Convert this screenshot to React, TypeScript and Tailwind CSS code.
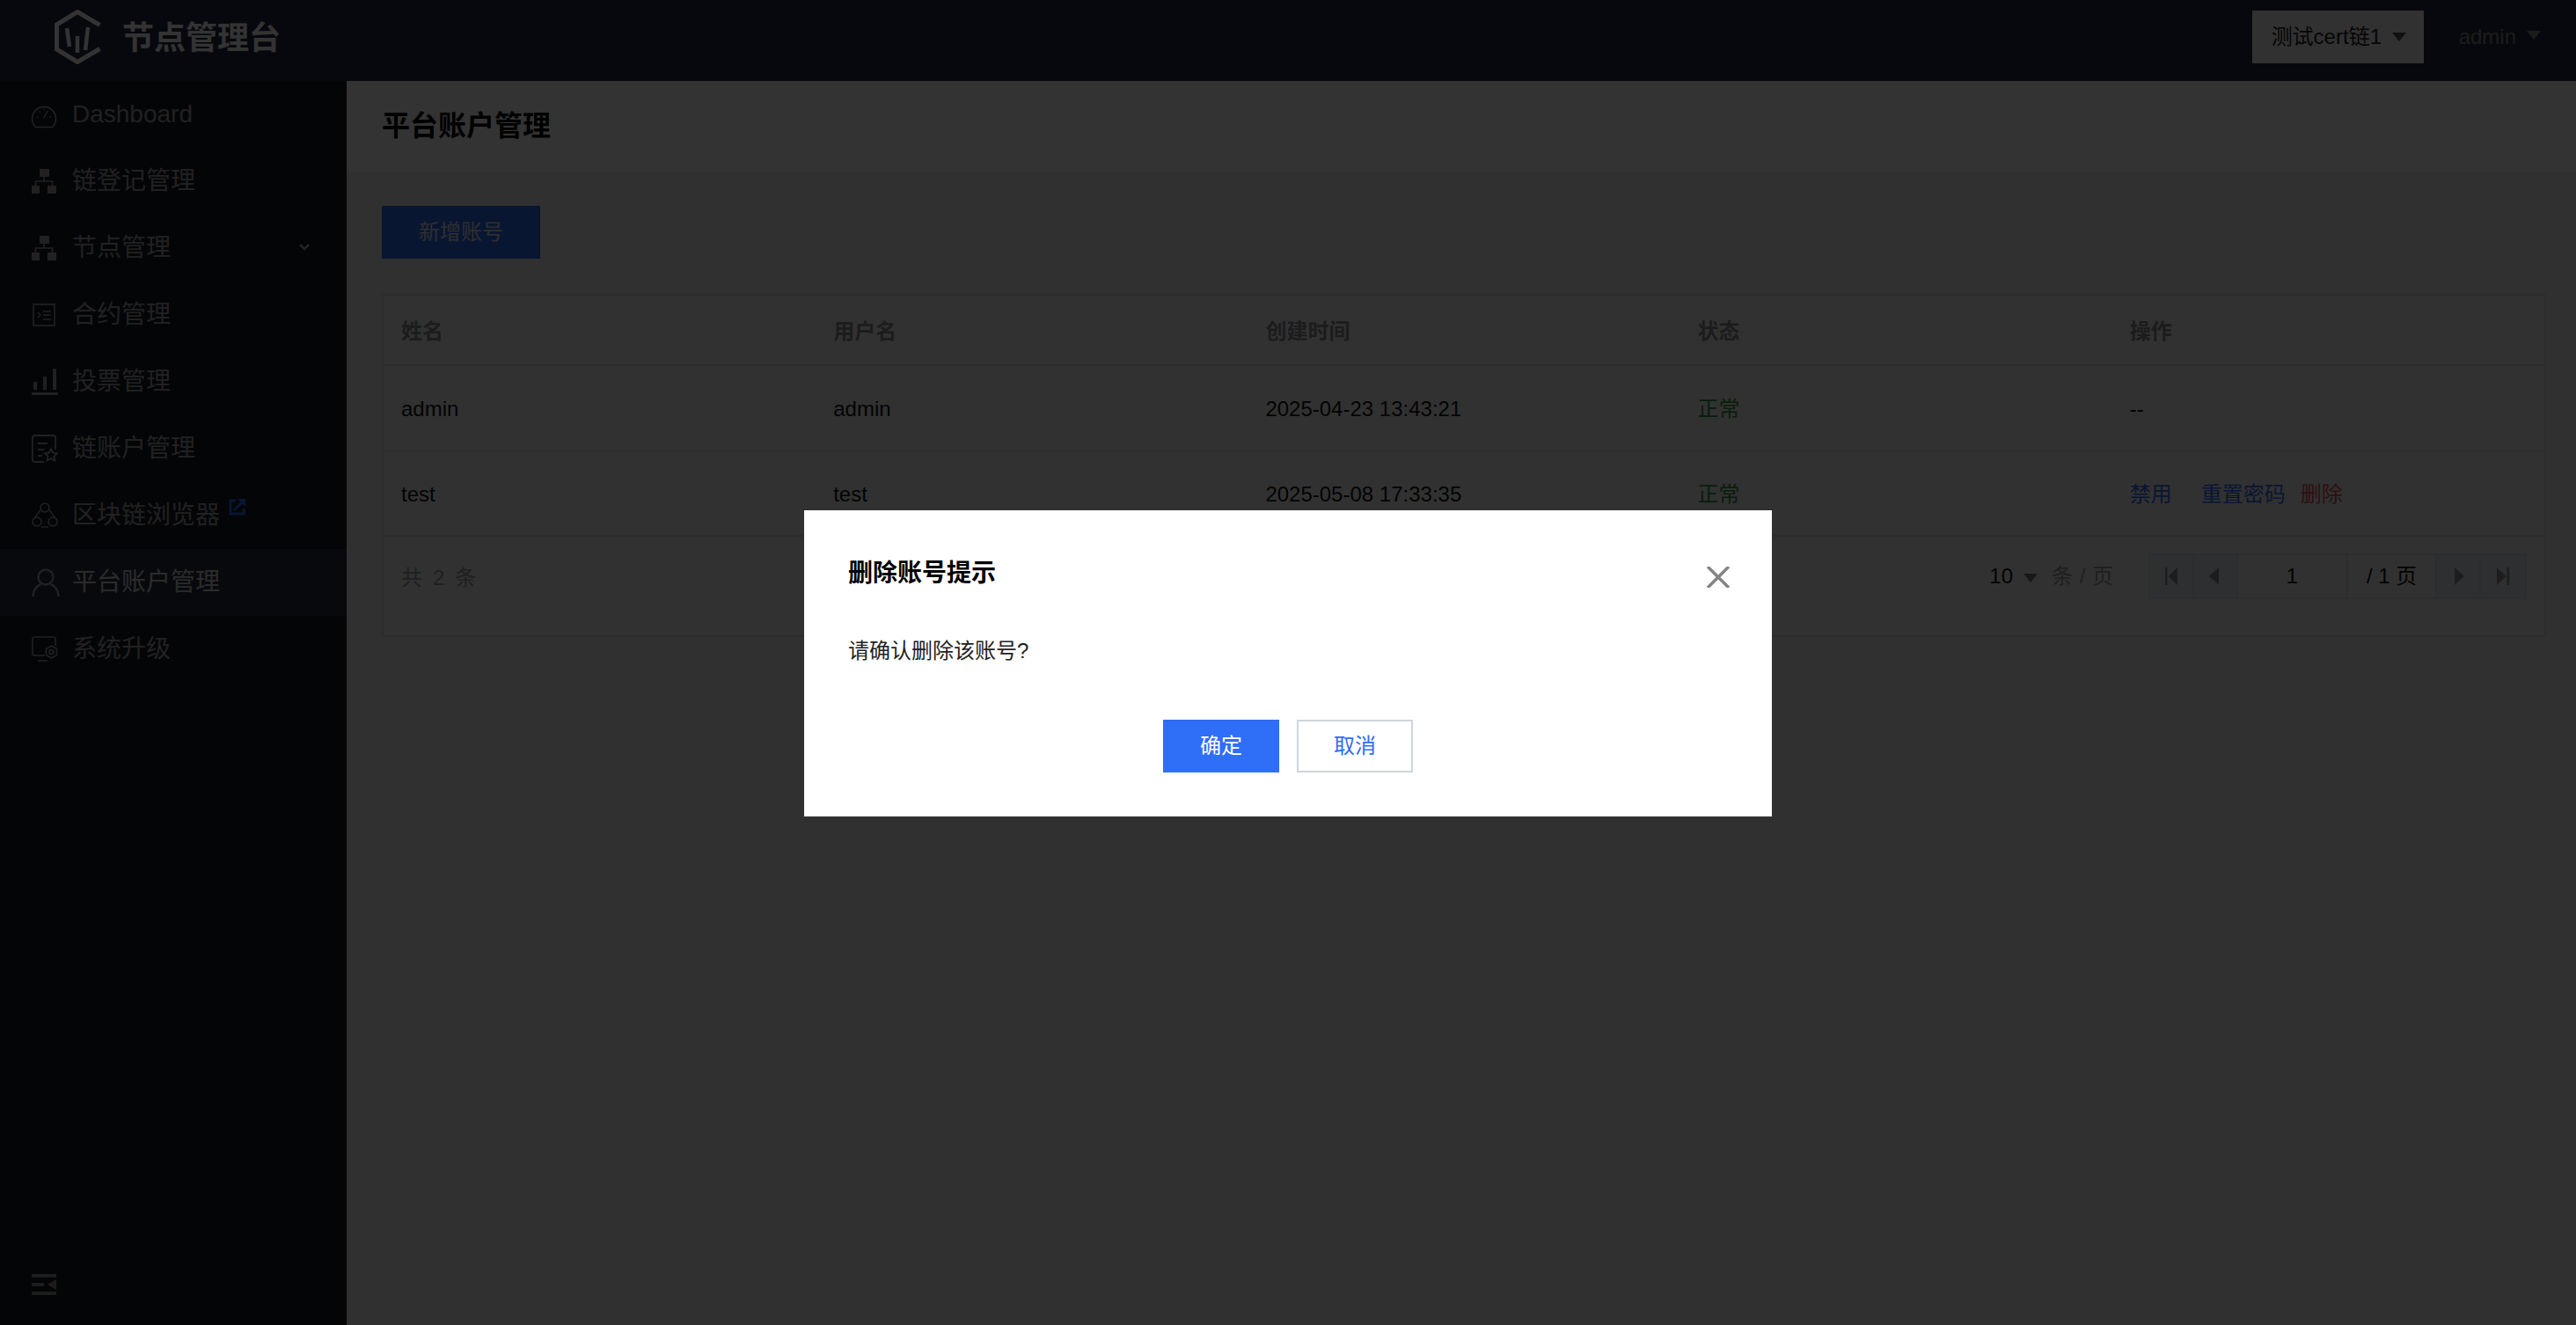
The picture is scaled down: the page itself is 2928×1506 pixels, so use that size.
import React from "react";

const font = { fontFamily: '"Liberation Sans", "Noto Sans CJK SC", sans-serif' };

const Gauge = () => (
  <svg width="28" height="34" viewBox="0 0 28 34" fill="none" stroke="currentColor" strokeWidth="1.6">
    <path d="M4.500 31.500A13.500 13.500 0 1 1 23.500 31.500Z" />
    <path d="M14 21 18 13M6 20h1.500M20.500 20H22M8.500 13.500l1 1M14 10.500V12" strokeWidth="1.400" />
  </svg>
);
const Sitemap = () => (
  <svg width="28" height="28" viewBox="0 0 28 28" fill="currentColor">
    <rect x="9" y="0" width="11" height="9" />
    <rect x="0" y="19" width="9" height="9" />
    <rect x="18" y="19" width="10" height="9" />
    <path d="M14 9v5M4.500 19v-5h19v5" fill="none" stroke="currentColor" strokeWidth="1.600" />
  </svg>
);
const Contract = () => (
  <svg width="28" height="28" viewBox="0 0 28 28" fill="none" stroke="currentColor" strokeWidth="1.600">
    <rect x="2" y="2" width="24" height="24" />
    <path d="M7 11l3 3-3 3M13 10h9M13 14h9M13 19h9" strokeWidth="1.300" />
  </svg>
);
const Bars = () => (
  <svg width="30" height="30" viewBox="0 0 30 30" fill="currentColor">
    <rect x="2" y="15" width="4" height="9" />
    <rect x="13" y="9" width="4" height="15" />
    <rect x="24" y="0" width="4" height="24" />
    <rect x="0" y="27" width="30" height="3" />
  </svg>
);
const DocStar = () => (
  <svg width="30" height="32" viewBox="0 0 30 32" fill="none" stroke="currentColor" strokeWidth="1.800">
    <path d="M14 31H3a2 2 0 0 1-2-2V3a2 2 0 0 1 2-2h22a2 2 0 0 1 2 2v14" />
    <path d="M7 10h11M7 17h7M7 24h5" />
    <path d="M22 16l2.200 4.600 5 .6-3.700 3.400 1 5-4.500-2.500-4.500 2.500 1-5-3.700-3.400 5-.6Z" />
  </svg>
);
const Circles = () => (
  <svg width="30" height="30" viewBox="0 0 30 30" fill="none" stroke="currentColor" strokeWidth="1.500">
    <circle cx="15" cy="6" r="5" />
    <circle cx="6" cy="22" r="5" />
    <circle cx="24" cy="22" r="5" />
    <path d="M10 9 3.500 17M20 9l6.500 8M11 28h8" />
  </svg>
);
const User = () => (
  <svg width="32" height="32" viewBox="0 0 32 32" fill="none" stroke="currentColor" strokeWidth="2.400">
    <circle cx="16" cy="10" r="8.500" />
    <path d="M1.500 32c0-8 5-13 9-13.500M30.500 32c0-8-5-13-9-13.500" />
  </svg>
);
const Monitor = () => (
  <svg width="30" height="30" viewBox="0 0 30 30" fill="none" stroke="currentColor" strokeWidth="1.500">
    <path d="M15 22H3a2 2 0 0 1-2-2V3a2 2 0 0 1 2-2h22a2 2 0 0 1 2 2v8M7 28h11" />
    <path d="M22.500 11l6 3.500v7l-6 3.500-6-3.500v-7Z" />
    <circle cx="22.500" cy="18" r="2.500" />
  </svg>
);
const Logo = () => (
  <svg width="53" height="62" viewBox="0 0 53 62" fill="none" stroke="#ffffff" strokeWidth="5">
    <path d="M51.500 17.500 26 2.500 2.500 17v28L26 59.500 51.500 44.500" />
    <path d="M14 21 17 42" strokeWidth="4.500" />
    <path d="M26 30V49" strokeWidth="4.500" />
    <path d="M38 20 35 46" strokeWidth="4.500" />
  </svg>
);

const menu: [React.ReactNode, string][] = [
  [<Gauge />, "Dashboard"],
  [<Sitemap />, "链登记管理"],
  [<Sitemap />, "节点管理"],
  [<Contract />, "合约管理"],
  [<Bars />, "投票管理"],
  [<DocStar />, "链账户管理"],
  [<Circles />, "区块链浏览器"],
  [<User />, "平台账户管理"],
  [<Monitor />, "系统升级"],
];

const Tri = ({ className }: { className: string }) => (
  <span className={"block h-0 w-0 border-x-[8px] border-t-[10px] border-x-transparent " + className} />
);

const PageBtn = ({ d }: { d: string }) => (
  <div className="flex h-full w-[50px] items-center justify-center border-r-2 border-[#dcdfe6] bg-[#e3e8ee] last:border-r-0">
    <svg width="14" height="20" viewBox="0 0 14 20" fill="#8f8f8f">
      <path d={d} />
    </svg>
  </div>
);

const Row = ({ children, className }: { children: React.ReactNode; className: string }) => (
  <div className={"grid grid-cols-5 items-center border-b-2 text-[24px] *:pl-5 " + className}>{children}</div>
);

export default function App() {
  return (
    <div className="relative flex h-screen w-full flex-col overflow-hidden bg-[#ffffff]" style={font}>
      <header className="flex h-[92px] shrink-0 items-center justify-between bg-[#232b40] pb-[8px] pl-[62px] pr-[40px]">
        <div className="flex items-center gap-[24px]">
          <Logo />
          <span className="pt-[3px] text-[36px] font-bold leading-none text-white">节点管理台</span>
        </div>
        <div className="flex items-center">
          <div className="flex h-[60px] w-[195px] items-center gap-[12px] bg-[#f3f3f3] pl-[22px] text-[24px] text-[#222]">
            <span>测试cert链1</span>
            <Tri className="border-t-[#555]" />
          </div>
          <span className="ml-[40px] text-[24px] text-[#8c8c8c]">admin</span>
          <Tri className="ml-[12px] -translate-y-[2px] border-t-[#8c8c8c]" />
        </div>
      </header>

      <div className="flex min-h-0 flex-1">
        <aside className="flex w-[394px] shrink-0 flex-col bg-[#161a24]">
          {menu.map(([icon, label], i) => (
            <div
              key={label}
              className={
                "relative flex h-[76px] items-center text-[28px] " +
                (i === 7 ? "bg-[#2a3144] text-[#d8d8d8]" : "text-[#a4a6ab]")
              }
            >
              <span className="flex w-[82px] shrink-0 pl-[36px] text-[#a4a6ab]">{icon}</span>
              <span>{label}</span>
              {i === 2 && (
                <svg className="absolute left-[340px] top-[32px]" width="12" height="10" viewBox="0 0 12 10" fill="none" stroke="#aaa" strokeWidth="2.500">
                  <path d="M1 2l5 5 5-5" />
                </svg>
              )}
              {i === 6 && (
                <svg className="absolute left-[260px] top-[18px]" width="20" height="20" viewBox="0 0 20 20" fill="none" stroke="#2f6ef7" strokeWidth="3">
                  <path d="M8 3H2v15h15v-6" />
                  <path d="M6 14 16 4" />
                  <path d="M10 1h9v9" fill="#2f6ef7" stroke="none" />
                </svg>
              )}
            </div>
          ))}
          <div className="mt-auto pb-[34px] pl-[36px]">
            <svg width="28" height="24" viewBox="0 0 28 24" fill="#909090">
              <rect width="28" height="4" />
              <rect y="10" width="14" height="4" />
              <rect y="20" width="28" height="4" />
              <path d="M28 6v12L18 12Z" />
            </svg>
          </div>
        </aside>

        <main className="flex min-w-0 flex-1 flex-col bg-[#efefef]">
          <div className="flex h-[104px] shrink-0 items-center bg-white pl-[40px] pb-[2px] text-[32px] font-bold text-black">
            平台账户管理
          </div>
          <div className="flex flex-col pl-[40px] pr-[34px] pt-[38px]">
            <button className="h-[60px] w-[180px] bg-[#2f6ef7] text-[24px] text-[#e6e6e6]">新增账号</button>
            <div className="mt-[40px] border-2 border-b-0 border-[#d8dade] bg-[#f5f5f5]">
              <Row className="h-[80px] border-[#d8dade] pt-[3px] font-bold text-[#8c8c8c]">
                <span>姓名</span><span>用户名</span><span>创建时间</span><span>状态</span><span>操作</span>
              </Row>
              <Row className="h-[98px] border-[#e8e9ec] pt-[2px] text-[#111]">
                <span>admin</span><span>admin</span><span>2025-04-23 13:43:21</span>
                <span className="text-[#2a8f3d]">正常</span><span>--</span>
              </Row>
              <Row className="h-[96px] border-[#d8dade] pt-[1px] text-[#111]">
                <span>test</span><span>test</span><span>2025-05-08 17:33:35</span>
                <span className="text-[#2a8f3d]">正常</span>
                <div className="flex">
                  <span className="text-[#2f6ef7]">禁用</span>
                  <span className="ml-[33px] text-[#2f6ef7]">重置密码</span>
                  <span className="ml-[17px] text-[#e34d59]">删除</span>
                </div>
              </Row>
              <div className="flex h-[114px] items-center justify-between border-b-2 border-[#d8dade] pb-[22px] pl-5 pr-5 text-[24px] text-[#999]">
                <span className="mt-[4px] flex gap-[12px]"><span>共</span><span>2</span><span>条</span></span>
                <div className="flex items-center">
                  <span className="text-[#111]">10</span>
                  <Tri className="ml-[12px] mt-[4px] border-t-[#777]" />
                  <span className="ml-[16px] [word-spacing:1px]">条 / 页</span>
                  <div className="ml-[40px] flex h-[52px] w-[430px] items-center border-2 border-[#dcdfe6]">
                    <PageBtn d="M0 0h2.500v20H0ZM14 0v20L3.500 10Z" />
                    <PageBtn d="M11 0v20L0 10Z" />
                    <div className="flex h-full w-[126px] items-center justify-center border-r-2 border-[#dcdfe6] text-[#111]">1</div>
                    <div className="flex h-full w-[102px] items-center justify-center border-r-2 border-[#dcdfe6] text-[#111]">/ 1 页</div>
                    <PageBtn d="M3 0v20L14 10Z" />
                    <PageBtn d="M0 0v20L10.500 10ZM11.500 0H14v20h-2.500Z" />
                  </div>
                </div>
              </div>
            </div>
          </div>
        </main>
      </div>

      <div className="absolute inset-0 bg-black/80" />

      <div className="absolute inset-0 flex items-center justify-center pt-[2px]">
        <div className="flex h-[348px] w-[1100px] flex-col bg-white px-[50px]">
          <div className="flex items-start justify-between pt-[56px]">
            <span className="text-[28px] font-bold leading-[32px] text-black">删除账号提示</span>
            <svg className="mr-[-2px] mt-[8px]" width="26" height="24" viewBox="0 0 26 24" fill="none" stroke="#858585" strokeWidth="3.500">
              <path d="M1 0l24 24M25 0 1 24" />
            </svg>
          </div>
          <p className="mt-[56px] text-[24px] leading-[32px] text-[#222]">请确认删除该账号?</p>
          <div className="mt-[62px] flex justify-center gap-[20px]">
            <button className="h-[60px] w-[132px] bg-[#2f6ef7] text-[24px] text-white">确定</button>
            <button className="h-[60px] w-[132px] border-2 border-[#d0d5de] bg-white text-[24px] text-[#2f6ef7]">取消</button>
          </div>
        </div>
      </div>
    </div>
  );
}
